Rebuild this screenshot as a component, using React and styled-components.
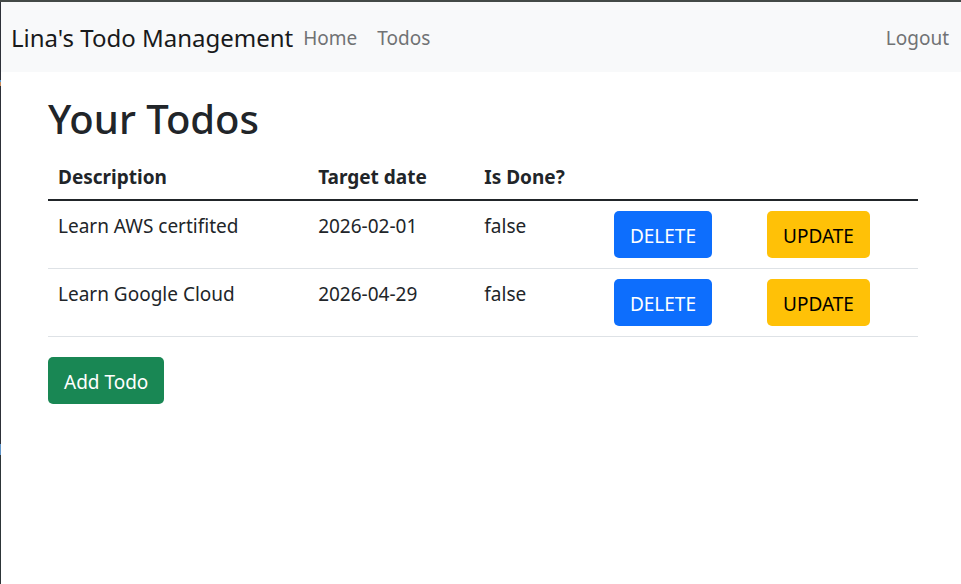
import React from "react";
import styled, { createGlobalStyle } from "styled-components";

const GlobalStyle = createGlobalStyle`
  *, *::before, *::after { box-sizing: border-box; }
  body {
    margin: 0;
    background: #fff;
    color: #212529;
    font-family: "Segoe UI", "Noto Sans", "Open Sans", sans-serif;
    font-size: 19px;
    line-height: 30px;
  }
`;

const Page = styled.div`
  min-height: 100vh;
  padding-left: 1px;
  border-top: 2px solid #434947;
  background: linear-gradient(
      #2d3038 0 78px,
      #5b9bd0 78px 80px,
      #c98a5a 80px 84px,
      #2d3038 84px 442px,
      #5f94c8 442px 453px,
      #2d3538 453px
    )
    left top / 1px 100% no-repeat;
`;

const Navbar = styled.nav`
  display: flex;
  align-items: center;
  padding: 11px 2px 9px 0;
  background: #f8f9fa;
`;

const Brand = styled.a`
  padding: 6px 0;
  margin: 0 0 0 10px;
  font-size: 24px;
  line-height: 38px;
  color: #181a1b;
  text-decoration: none;
  white-space: nowrap;
`;

const NavList = styled.ul`
  display: flex;
  flex: ${(p) => (p.$grow ? 1 : "none")};
  margin: 0;
  padding: 0;
  list-style: none;
`;

const NavLink = styled.a`
  display: block;
  padding: 10px;
  color: #707274;
  text-decoration: none;
`;

const Container = styled.main`
  max-width: 1140px;
  padding: 19px 43px 0 47px;
`;

const Title = styled.h1`
  margin: 0 0 6px;
  font-size: 40px;
  line-height: 56px;
  font-weight: 500;
`;

const Table = styled.table`
  width: 100%;
  margin-bottom: 20px;
  border-collapse: collapse;
  table-layout: fixed;
`;

const HeadCell = styled.th`
  padding: 9px 10px 7px;
  text-align: left;
  font-weight: 700;
  border-bottom: 2px solid #212529;
`;

const Cell = styled.td`
  padding: 10px;
  vertical-align: top;
  border-bottom: 1px solid #dee2e6;
`;

const Column = styled.col`
  width: ${(p) => p.$width};
`;

const tones = {
  primary: ["#0d6efd", "#fff"],
  warning: ["#ffc107", "#000"],
  success: ["#198754", "#fff"],
};

const Button = styled.button`
  padding: 10px 16px 6px;
  border: 0;
  border-radius: 5px;
  background: ${(p) => tones[p.$tone][0]};
  color: ${(p) => tones[p.$tone][1]};
  font: inherit;
  line-height: 31px;
  vertical-align: top;
  white-space: nowrap;
  cursor: pointer;
`;

const todos = [
  { description: "Learn AWS certifited", date: "2026-02-01", done: false },
  { description: "Learn Google Cloud", date: "2026-04-29", done: false },
];

export default function App() {
  return (
    <Page>
      <GlobalStyle />
      <Navbar>
        <Brand href="#">Lina's Todo Management</Brand>
        <NavList $grow>
          <li><NavLink href="#home">Home</NavLink></li>
          <li><NavLink href="#todos">Todos</NavLink></li>
        </NavList>
        <NavList>
          <li><NavLink href="#logout">Logout</NavLink></li>
        </NavList>
      </Navbar>
      <Container>
        <Title>Your Todos</Title>
        <Table>
          <colgroup>
            <Column $width="29.9%" />
            <Column $width="19.1%" />
            <Column $width="14.9%" />
            <Column $width="17.6%" />
            <Column $width="18.5%" />
          </colgroup>
          <thead>
            <tr>
              <HeadCell>Description</HeadCell>
              <HeadCell>Target date</HeadCell>
              <HeadCell>Is Done?</HeadCell>
              <HeadCell />
              <HeadCell />
            </tr>
          </thead>
          <tbody>
            {todos.map((todo) => (
              <tr key={todo.description}>
                <Cell>{todo.description}</Cell>
                <Cell>{todo.date}</Cell>
                <Cell>{String(todo.done)}</Cell>
                <Cell><Button type="button" $tone="primary">DELETE</Button></Cell>
                <Cell><Button type="button" $tone="warning">UPDATE</Button></Cell>
              </tr>
            ))}
          </tbody>
        </Table>
        <Button type="button" $tone="success">Add Todo</Button>
      </Container>
    </Page>
  );
}
